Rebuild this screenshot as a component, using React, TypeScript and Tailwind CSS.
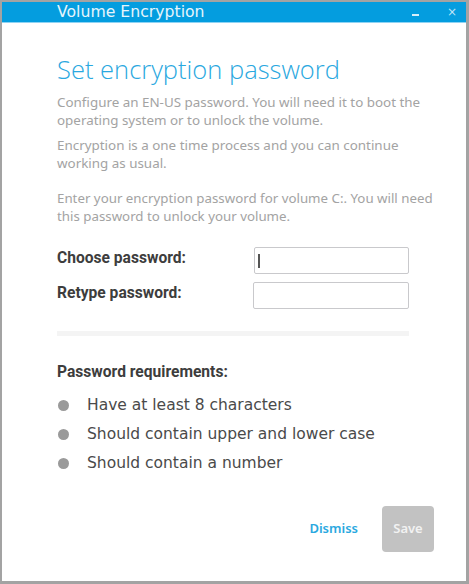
import React from 'react'

const requirements = [
  'Have at least 8 characters',
  'Should contain upper and lower case',
  'Should contain a number',
]

export default function App() {
  return (
    <div className="flex h-[584px] w-[469px] flex-col border-t-2 border-r-[3px] border-b-[3px] border-l-2 border-[#a3a3a3] bg-white">
      {/* Title bar */}
      <div className="flex h-[21px] shrink-0 items-center border-b border-[#8fd3f3] bg-[#049ddf] pl-[55px] pr-[9px] text-white">
        <span className="text-[15.7px] leading-none text-[#e6f5fc]" style={{ fontFamily: '"DejaVu Sans", sans-serif' }}>
          Volume Encryption
        </span>
        <span className="ml-auto mt-[5px] h-[2px] w-[7px] bg-[#d7eefa]" />
        <span className="ml-[28px] text-[12px] leading-none text-[#bfe5f7]" style={{ fontFamily: '"DejaVu Sans", sans-serif' }}>
          ×
        </span>
      </div>

      {/* Body */}
      <div className="flex flex-1 flex-col pl-[55px] pr-[57px]" style={{ fontFamily: '"Noto Sans", sans-serif' }}>
        <h1
          className="mt-[30px] text-[25.5px] leading-[32px] font-light text-[#2aa8e0]"
          style={{ fontFamily: '"Open Sans", sans-serif' }}
        >
          Set encryption password
        </h1>
        <p className="mt-[8px] w-[380px] text-[13.4px] leading-[18px] text-[#a3a3a3]">
          Configure an EN-US password. You will need it to boot the operating system or to unlock the volume.
        </p>
        <p className="mt-[7px] w-[380px] text-[13.4px] leading-[18px] text-[#a3a3a3]">
          Encryption is a one time process and you can continue working as usual.
        </p>
        <p className="mt-[17px] w-[380px] text-[13.3px] leading-[18px] text-[#a3a3a3]">
          Enter your encryption password for volume C:. You will need this password to unlock your volume.
        </p>

        <div className="mt-[22px] flex flex-col gap-[8px]" style={{ fontFamily: 'Roboto, sans-serif' }}>
          <div className="flex items-center justify-between">
            <span className="mb-[6px] text-[15.6px] leading-[18px] font-bold text-[#3d3d3d]">Choose password:</span>
            <div className="flex h-[27px] w-[155px] items-center rounded-[2px] border border-[#c9c9cc] px-[3px]">
              <span className="h-[14px] w-[2px] bg-[#555]" />
            </div>
          </div>
          <div className="flex items-center justify-between">
            <span className="mb-[6px] text-[15.6px] leading-[18px] font-bold text-[#3d3d3d]">Retype password:</span>
            <div className="h-[27px] w-[156px] rounded-[2px] border border-[#c9c9cc]" />
          </div>
        </div>

        <div className="mt-[22px] h-[5px] bg-[#f4f4f4]" />

        <h2
          className="mt-[27px] text-[15.6px] leading-[18px] font-bold text-[#3d3d3d]"
          style={{ fontFamily: 'Roboto, sans-serif' }}
        >
          Password requirements:
        </h2>
        <ul className="mt-[14px] flex flex-col gap-[8px]" style={{ fontFamily: '"DejaVu Sans", sans-serif' }}>
          {requirements.map((item) => (
            <li key={item} className="flex h-[21px] items-center text-[15.5px] text-[#4a4a4a]">
              <span className="ml-[1px] mr-[18px] size-[11px] rounded-full bg-[#9a9a9a]" />
              {item}
            </li>
          ))}
        </ul>

        <div className="mt-auto mb-[29px] flex items-center justify-end gap-[24px]">
          <button type="button" className="text-[13px] font-semibold text-[#2aa8e0]">
            Dismiss
          </button>
          <button
            type="button"
            className="-mr-[25px] h-[46px] w-[52px] rounded-[4px] bg-[#c2c2c2] text-[13px] font-semibold text-[#f2f2f2]"
          >
            Save
          </button>
        </div>
      </div>
    </div>
  )
}
